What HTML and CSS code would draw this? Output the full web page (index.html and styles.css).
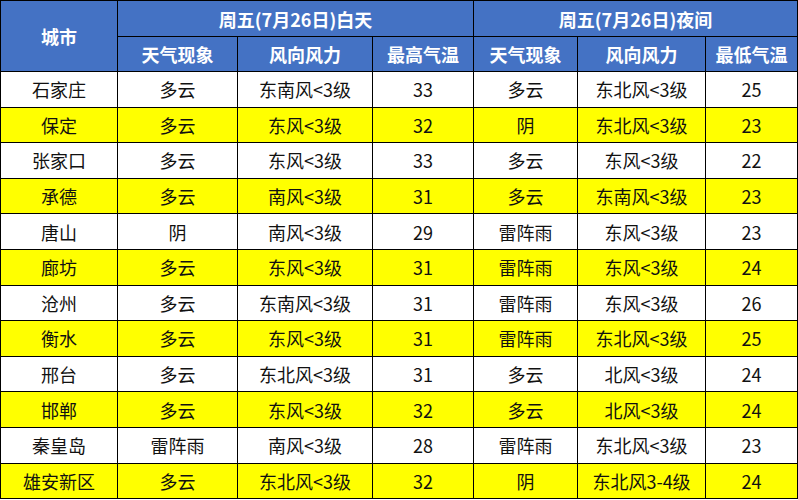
FILE: index.html
```html
<!DOCTYPE html>
<html lang="zh">
<head>
<meta charset="utf-8">
<link rel="stylesheet" href="styles.css">
</head>
<body>
<table class="wx">
<colgroup>
<col class="c1"><col class="c2"><col class="c3"><col class="c4"><col class="c5"><col class="c6"><col class="c7">
</colgroup>
<thead>
<tr class="h1"><th rowspan="2">城市</th><th colspan="3">周五(7月26日)白天</th><th colspan="3">周五(7月26日)夜间</th></tr>
<tr class="h2"><th>天气现象</th><th>风向风力</th><th>最高气温</th><th>天气现象</th><th>风向风力</th><th>最低气温</th></tr>
</thead>
<tbody>
<tr><td>石家庄</td><td>多云</td><td>东南风&lt;3级</td><td>33</td><td>多云</td><td>东北风&lt;3级</td><td>25</td></tr>
<tr class="y"><td>保定</td><td>多云</td><td>东风&lt;3级</td><td>32</td><td>阴</td><td>东北风&lt;3级</td><td>23</td></tr>
<tr><td>张家口</td><td>多云</td><td>东风&lt;3级</td><td>33</td><td>多云</td><td>东风&lt;3级</td><td>22</td></tr>
<tr class="y"><td>承德</td><td>多云</td><td>南风&lt;3级</td><td>31</td><td>多云</td><td>东南风&lt;3级</td><td>23</td></tr>
<tr><td>唐山</td><td>阴</td><td>南风&lt;3级</td><td>29</td><td>雷阵雨</td><td>东风&lt;3级</td><td>23</td></tr>
<tr class="y"><td>廊坊</td><td>多云</td><td>东风&lt;3级</td><td>31</td><td>雷阵雨</td><td>东风&lt;3级</td><td>24</td></tr>
<tr><td>沧州</td><td>多云</td><td>东南风&lt;3级</td><td>31</td><td>雷阵雨</td><td>东风&lt;3级</td><td>26</td></tr>
<tr class="y"><td>衡水</td><td>多云</td><td>东风&lt;3级</td><td>31</td><td>雷阵雨</td><td>东北风&lt;3级</td><td>25</td></tr>
<tr><td>邢台</td><td>多云</td><td>东北风&lt;3级</td><td>31</td><td>多云</td><td>北风&lt;3级</td><td>24</td></tr>
<tr class="y"><td>邯郸</td><td>多云</td><td>东风&lt;3级</td><td>32</td><td>多云</td><td>北风&lt;3级</td><td>24</td></tr>
<tr><td>秦皇岛</td><td>雷阵雨</td><td>南风&lt;3级</td><td>28</td><td>雷阵雨</td><td>东北风&lt;3级</td><td>23</td></tr>
<tr class="y"><td>雄安新区</td><td>多云</td><td>东北风&lt;3级</td><td>32</td><td>阴</td><td>东北风3-4级</td><td>24</td></tr>
</tbody>
</table>
</body>
</html>
```
FILE: styles.css
```css
html, body {
  margin: 0;
  padding: 0;
  background: #fff;
}
.wx {
  border-collapse: collapse;
  table-layout: fixed;
  width: 797px;
  font-family: "Noto Sans CJK SC", "Noto Sans", sans-serif;
  font-size: 18px;
  color: #111;
}
.c1 { width: 117px; }
.c2 { width: 120px; }
.c3 { width: 135px; }
.c4 { width: 101px; }
.c5 { width: 104px; }
.c6 { width: 128px; }
.c7 { width: 92px; }
.wx th, .wx td {
  border: 1.5px solid #000;
  padding: 0;
  text-align: center;
  vertical-align: middle;
  line-height: 20px;
  white-space: nowrap;
}
.wx th {
  background: #4472c4;
  color: #fff;
  font-weight: bold;
}
.h1 { height: 36px; }
.h2 { height: 35px; }
.wx tbody tr { height: 35.6px; }
.wx tr.y td { background: #ffff00; }
```
